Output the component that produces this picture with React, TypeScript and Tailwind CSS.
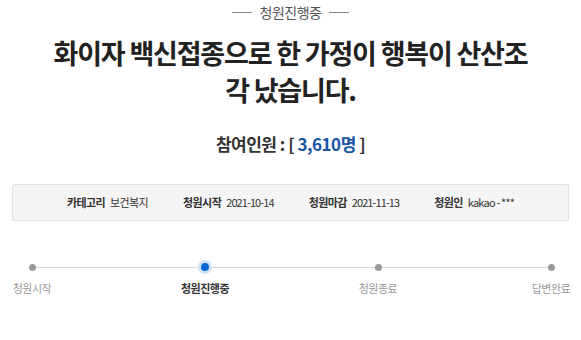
import React from "react";

const KR = { fontFamily: '"Noto Sans CJK KR", "Noto Sans", sans-serif' };

const steps = [
  { label: "청원시작", active: false },
  { label: "청원진행중", active: true },
  { label: "청원종료", active: false },
  { label: "답변완료", active: false },
];

export default function App() {
  return (
    <div className="w-[581px] h-[340px] bg-white overflow-hidden" style={KR}>
      <div className="pt-[2px] flex items-center justify-center gap-[8px]">
        <div className="w-[20px] h-px bg-[#888]" />
        <span className="text-[14px] leading-[20px] text-[#555] tracking-[-0.5px]">청원진행중</span>
        <div className="w-[20px] h-px bg-[#888]" />
      </div>

      <h1 className="mt-[12px] text-center text-[27px] leading-[37px] font-bold text-[#222] tracking-[-1.2px]">
        화이자 백신접종으로 한 가정이 행복이 산산조
        <br />각 났습니다.
      </h1>

      <div className="mt-[24px] text-center text-[17px] leading-[24px] font-bold text-[#333] tracking-[-0.5px]">
        참여인원 : [ <span className="text-[#1653a4]">3,610명</span> ]
      </div>

      <div className="mt-[28px] mx-[12px] h-[37px] border border-[#e2e2e2] bg-[#f5f5f5] rounded-[2px] flex items-center justify-center gap-[35px] text-[11px] text-[#333] tracking-[-0.6px]">
        <div className="flex items-center gap-[5px]">
          <span className="font-bold">카테고리</span>
          <span>보건복지</span>
        </div>
        <div className="flex items-center gap-[5px]">
          <span className="font-bold">청원시작</span>
          <span className="tracking-[-0.9px]">2021-10-14</span>
        </div>
        <div className="flex items-center gap-[5px]">
          <span className="font-bold">청원마감</span>
          <span className="tracking-[-0.9px]">2021-11-13</span>
        </div>
        <div className="flex items-center gap-[5px]">
          <span className="font-bold">청원인</span>
          <span className="tracking-[-0.8px]">kakao - ***</span>
        </div>
      </div>

      <div className="relative mt-[39px] pl-[2px] flex justify-between">
        <div className="absolute left-[32px] right-[30px] top-[7px] h-px bg-[#d9d9d9]" />
        {steps.map((s) => (
          <div key={s.label} className="relative w-[60px] flex flex-col items-center">
            <div className="h-[14px] flex items-center justify-center">
              {s.active ? (
                <div className="w-[14px] h-[14px] rounded-full bg-[#cfe3fb] flex items-center justify-center">
                  <div className="w-[8px] h-[8px] rounded-full bg-[#0a66d4]" />
                </div>
              ) : (
                <div className="w-[7px] h-[7px] rounded-full bg-[#9a9a9a]" />
              )}
            </div>
            <span
              className={
                "mt-[6px] text-[11px] leading-[16px] whitespace-nowrap tracking-[-0.5px] " +
                (s.active ? "font-bold text-[#333]" : "text-[#9a9a9a]")
              }
            >
              {s.label}
            </span>
          </div>
        ))}
      </div>
    </div>
  );
}
